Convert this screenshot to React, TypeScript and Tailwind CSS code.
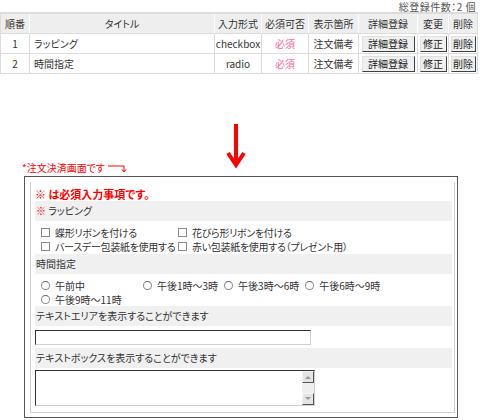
import React from "react";

const rows = [
  { no: 1, title: "ラッピング", type: "checkbox" },
  { no: 2, title: "時間指定", type: "radio" },
];

const btn =
  "h-[16px] px-0 leading-[13px] whitespace-nowrap text-[10px] text-[#222] bg-[#efefef] border border-t-[#e0e0e0] border-l-[#e0e0e0] border-r-[#404040] border-b-[#404040]";

function Box() {
  return <span className="inline-block w-[9px] h-[9px] border border-[#8a8a8a] bg-white mr-[5px] shrink-0" />;
}

function Radio() {
  return (
    <span className="inline-block w-[9px] h-[9px] rounded-full border border-[#8a8a8a] border-t-[#666] bg-white mr-[5px] shrink-0" />
  );
}

function Band({ children }: { children: React.ReactNode }) {
  return <div className="h-[20px] leading-[20px] bg-[#f0f0f0] pl-[1px] text-[#333]">{children}</div>;
}

export default function App() {
  return (
    <div className="w-[480px] h-[420px] overflow-hidden bg-white text-[#333] text-[10px] leading-[13px] font-['Noto_Sans_CJK_JP','Noto_Sans',sans-serif] [font-feature-settings:'palt']">
      <div className="h-[12px] leading-[12px] pt-[1px] pr-[4px] text-right text-[10px] text-[#555] tracking-[0.5px]">総登録件数：2 個</div>

      <table className="w-[477px] border-separate border-spacing-0 border-t-2 border-l border-[#dcdcdc] table-fixed">
        <colgroup>
          <col className="w-[29px]" />
          <col className="w-[185px]" />
          <col className="w-[47px]" />
          <col className="w-[47px]" />
          <col className="w-[50px]" />
          <col className="w-[59px]" />
          <col className="w-[31px]" />
          <col className="w-[29px]" />
        </colgroup>
        <thead>
          <tr className="h-[20px] bg-[#eeeeee]">
            {["順番", "タイトル", "入力形式", "必須可否", "表示箇所", "詳細登録", "変更", "削除"].map((h, i) => (
              <th
                key={h}
                className={`font-normal text-center whitespace-nowrap border-b border-[#dcdcdc] border-r ${i === 7 ? "border-r-[#dcdcdc]" : "border-r-white"}`}
              >
                {h}
              </th>
            ))}
          </tr>
        </thead>
        <tbody>
          {rows.map((r) => (
            <tr key={r.no} className="h-[20px]">
              <td className="text-center border-r border-b border-[#dcdcdc]">{r.no}</td>
              <td className="pl-[4px] border-r border-b border-[#dcdcdc]">{r.title}</td>
              <td className="text-center border-r border-b border-[#dcdcdc]">{r.type}</td>
              <td className="text-center border-r border-b border-[#dcdcdc] text-[#ff6699]">必須</td>
              <td className="text-center border-r border-b border-[#dcdcdc] whitespace-nowrap">注文備考</td>
              <td className="text-center border-r border-b border-[#dcdcdc] py-0">
                <button className={`${btn} w-[53px] align-middle`}>詳細登録</button>
              </td>
              <td className="text-center border-r border-b border-[#dcdcdc] py-0">
                <button className={`${btn} w-[27px] align-middle`}>修正</button>
              </td>
              <td className="text-center border-r border-b border-[#dcdcdc] py-0">
                <button className={`${btn} w-[25px] align-middle`}>削除</button>
              </td>
            </tr>
          ))}
        </tbody>
      </table>

      {/* big arrow */}
      <div className="mt-[50px] ml-[226px] h-[38px]">
        <svg width="20" height="44" viewBox="0 0 20 44" className="overflow-visible">
          <line x1="10" y1="0" x2="10" y2="40" stroke="#ff0000" strokeWidth="4" />
          <polyline points="2,29 10,41 18,29" fill="none" stroke="#ff0000" strokeWidth="4" strokeLinejoin="miter" />
        </svg>
      </div>

      <div className="flex items-center h-[12px] pl-[22px] text-[10px] text-[#ff0000] leading-[12px]">
        <span>*注文決済画面です</span>
        <svg width="22" height="10" viewBox="0 0 22 10" className="ml-[2px]">
          <path d="M1 3 H17 V8" fill="none" stroke="#ff0000" strokeWidth="1" />
          <path d="M15 6.5 L17 9 L19 6.5" fill="none" stroke="#ff0000" strokeWidth="1" />
        </svg>
      </div>

      {/* order screen frame */}
      <div className="ml-[24px] mt-[2px] w-[434px] h-[242px] border border-[#555]">
        <div className="ml-[5px] mt-[5px] w-[425px] h-[231px] border-l border-r border-b border-[#cfcfcf] pl-[4px] pr-[2px]">
          <div className="pt-[5px] h-[19px] leading-[14px] text-[11px] font-bold text-[#ff0000]">※ は必須入力事項です。</div>

          <Band>
            <span className="text-[#ff0000] font-bold">※</span> ラッピング
          </Band>

          <div className="pt-[4px] pl-[6px] tracking-[-0.3px]">
            <div className="flex h-[14px] items-center">
              <div className="flex items-center w-[137px] whitespace-nowrap">
                <Box />
                蝶形リボンを付ける
              </div>
              <div className="flex items-center whitespace-nowrap">
                <Box />
                花びら形リボンを付ける
              </div>
            </div>
            <div className="flex h-[14px] items-center">
              <div className="flex items-center w-[137px] whitespace-nowrap">
                <Box />
                バースデー包装紙を使用する
              </div>
              <div className="flex items-center whitespace-nowrap">
                <Box />
                赤い包装紙を使用する（プレゼント用）
              </div>
            </div>
          </div>

          <div className="mt-[1px]">
            <Band>時間指定</Band>
          </div>

          <div className="pt-[4px] pl-[6px]">
            <div className="flex h-[14px] items-center whitespace-nowrap">
              <div className="flex items-center w-[102px]">
                <Radio />
                午前中
              </div>
              <div className="flex items-center mr-[6px]">
                <Radio />
                午後1時～3時
              </div>
              <div className="flex items-center mr-[6px]">
                <Radio />
                午後3時～6時
              </div>
              <div className="flex items-center">
                <Radio />
                午後6時～9時
              </div>
            </div>
            <div className="flex h-[14px] items-center whitespace-nowrap">
              <div className="flex items-center">
                <Radio />
                午後9時～11時
              </div>
            </div>
          </div>

          <div>
            <Band>テキストエリアを表示することができます</Band>
          </div>
          <div className="mt-[4px] w-[276px] h-[15px] bg-white border border-t-[#333] border-l-[#333] border-r-[#d0d0d0] border-b-[#d0d0d0]" />

          <div className="mt-[3px]">
            <Band>テキストボックスを表示することができます</Band>
          </div>
          <div className="mt-[2px] w-[280px] h-[36px] flex bg-white border border-t-[#333] border-l-[#333] border-r-[#d0d0d0] border-b-[#d0d0d0]">
            <div className="flex-1" />
            <div className="w-[12px] flex flex-col bg-[#eeeeee]">
              <div className="h-[12px] bg-[#e4e4e4] border border-t-[#f4f4f4] border-l-[#f4f4f4] border-r-[#555] border-b-[#555] flex items-center justify-center">
                <svg width="6" height="4" viewBox="0 0 6 4">
                  <path d="M0 4 L3 1 L6 4 Z" fill="#9a9a9a" />
                </svg>
              </div>
              <div className="flex-1" />
              <div className="h-[12px] bg-[#e4e4e4] border border-t-[#f4f4f4] border-l-[#f4f4f4] border-r-[#555] border-b-[#555] flex items-center justify-center">
                <svg width="6" height="4" viewBox="0 0 6 4">
                  <path d="M0 0 L3 3 L6 0 Z" fill="#9a9a9a" />
                </svg>
              </div>
            </div>
          </div>
        </div>
      </div>
    </div>
  );
}
